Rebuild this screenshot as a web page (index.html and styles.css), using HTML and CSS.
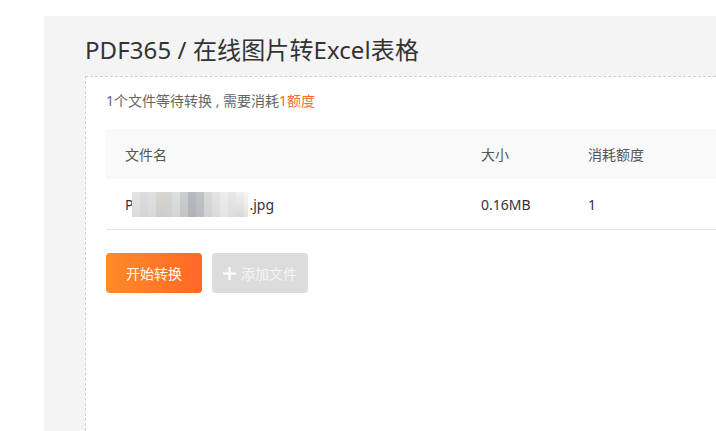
FILE: index.html
```html
<!DOCTYPE html>
<html lang="zh-CN">
<head>
<meta charset="utf-8">
<title>PDF365 / 在线图片转Excel表格</title>
<link rel="stylesheet" href="styles.css">
</head>
<body>
<div class="panel">
  <h1 class="title">PDF365 / 在线图片转Excel表格</h1>
  <div class="box">
    <p class="notice">1个文件等待转换 , 需要消耗<span class="hl">1额度</span></p>
    <div class="table">
      <div class="row head">
        <div class="cell">文件名</div>
        <div class="cell">大小</div>
        <div class="cell">消耗额度</div>
      </div>
      <div class="row body">
        <div class="cell name">P<span class="blur"><i class="b1"></i><i class="b2"></i><i class="b3"></i><i class="b4"></i><i class="b5"></i><i class="b6"></i><i class="b7"></i><i class="b8"></i><i class="b9"></i><i class="b10"></i><i class="b11"></i><i class="b12"></i><i class="b13"></i><i class="b14"></i><i class="b15"></i></span>.jpg</div>
        <div class="cell">0.16MB</div>
        <div class="cell">1</div>
      </div>
    </div>
    <div class="actions">
      <button class="btn primary">开始转换</button>
      <button class="btn disabled"><svg class="plus" width="13" height="13" viewBox="0 0 13 13"><path d="M6.5 0v13M0 6.5h13" stroke="#fff" stroke-width="2.2"/></svg>添加文件</button>
    </div>
  </div>
</div>
</body>
</html>
```

FILE: styles.css
```css
html, body {
  margin: 0;
  padding: 0;
  background: #fff;
  overflow: hidden;
  width: 716px;
  height: 431px;
}
body {
  font-family: "Noto Sans", "Noto Sans CJK SC", sans-serif;
  color: #333;
}
.panel {
  box-sizing: border-box;
  margin: 16px 0 0 44px;
  background: #f4f4f4;
  padding: 0 0 0 41px;
  height: 415px;
  width: 672px;
  display: flex;
  flex-direction: column;
}
.title {
  margin: 0;
  padding: 16px 0 0 0;
  height: 44px;
  font-size: 24px;
  font-weight: normal;
  line-height: 36px;
  color: #333;
  letter-spacing: 0.1px;
}
.box {
  flex: 1;
  border: 1px dashed #cfcfcf;
  border-right: none;
  border-bottom: none;
  background: #fff;
  padding: 14px 0 0 20px;
}
.notice {
  margin: 0 0 18px 0;
  font-size: 14px;
  line-height: 20px;
  color: #666;
}
.hl { color: #ff6a2a; }
.row {
  display: grid;
  grid-template-columns: 356px 107px 1fr;
  height: 50px;
  align-items: center;
  font-size: 14px;
}
.head {
  background: #f9f9f9;
  color: #555;
}
.body {
  border-bottom: 1px solid #e8e8e8;
  color: #333;
}
.cell {
  padding-left: 19px;
  white-space: nowrap;
}
.name {
  display: flex;
  align-items: center;
}
.blur {
  display: inline-flex;
  height: 25px;
  align-items: stretch;
  margin: 0 1px 0 -1px;
}
.blur i {
  display: block;
  width: 8px;
}
.b1 { background: linear-gradient(#e4e4e6, #dadbdc); }
.b2 { background: linear-gradient(#dcdde0, #d2d4d6); }
.b3 { background: linear-gradient(#e0e0e2, #d8d9da); }
.b4 { background: linear-gradient(#d8d6d0, #cfccc6); }
.b5 { background: linear-gradient(#d4d6d4, #cccfcd); }
.b6 { background: linear-gradient(#dedfdf, #d6d6d6); }
.b7 { background: linear-gradient(#cccdcf, #c3c4c6); }
.b8 { background: linear-gradient(#b8babf, #b0b2b7); }
.b9 { background: linear-gradient(#c2c3c6, #bbbcbf); }
.b10 { background: linear-gradient(#d6d8da, #cfd1d3); }
.b11 { background: linear-gradient(#e2e4e4, #dadcdc); }
.b12 { background: linear-gradient(#ececed, #e4e5e6); }
.b13 { background: linear-gradient(#e8e8ea, #dcdcde); }
.b14 { background: linear-gradient(#f0f0f0, #d8d8da); }
.b15 { background: linear-gradient(#f4f4f4, #e4e4e4); width: 4px !important; }
.actions {
  display: flex;
  gap: 10px;
  margin-top: 23px;
}
.btn {
  width: 96px;
  height: 40px;
  border: none;
  border-radius: 4px;
  font-family: inherit;
  font-size: 14px;
  color: #fff;
  padding: 0;
  display: flex;
  align-items: center;
  justify-content: center;
}
.primary {
  background: linear-gradient(90deg, #ff8b28, #ff6828);
}
.disabled {
  background: #dcdcdc;
  color: #f5f5f5;
}
.plus {
  margin-right: 5px;
}
```
